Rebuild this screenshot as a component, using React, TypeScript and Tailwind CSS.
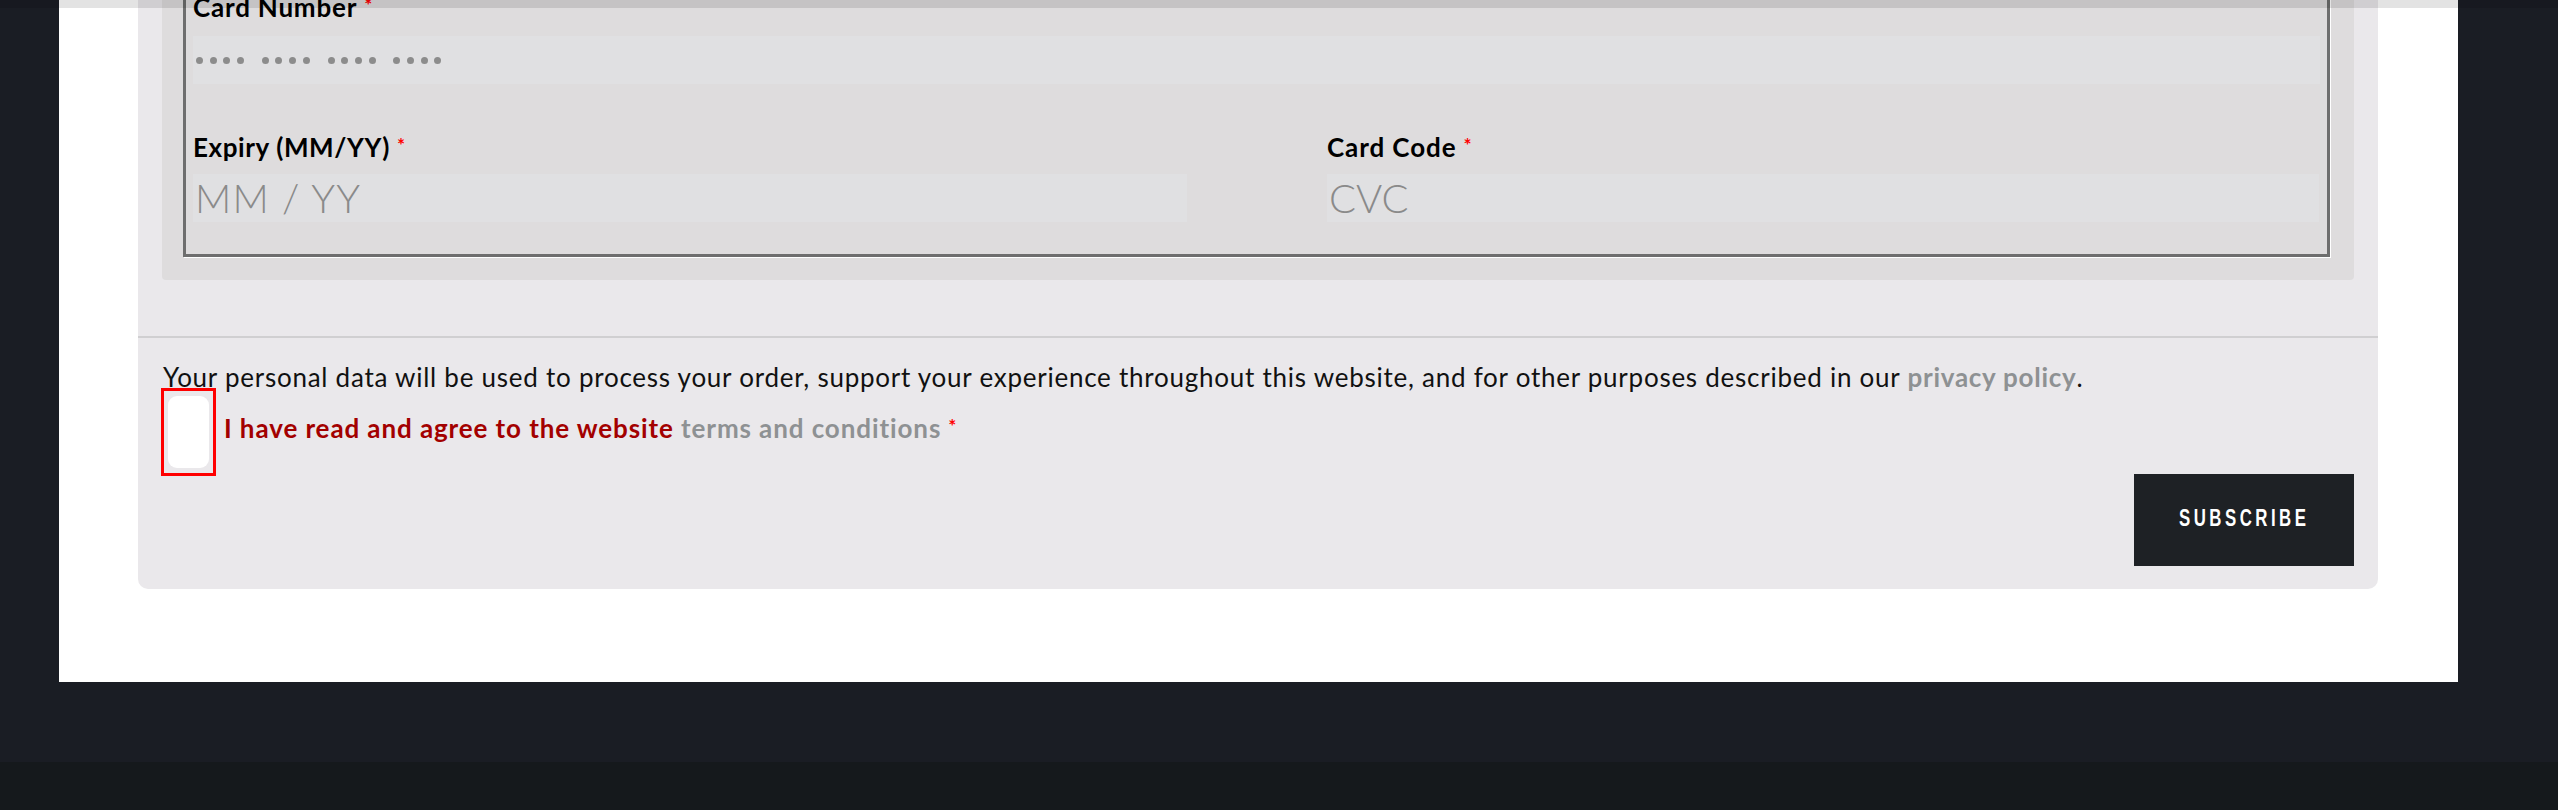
import React from "react";

const Star = () => (
  <span className="relative top-[3px] ml-[7px] align-top text-[19px] font-bold leading-none text-[#ff0000]">*</span>
);

const DotGroup = () => (
  <div className="flex gap-[6.7px]">
    {[0, 1, 2, 3].map((i) => (
      <div key={i} className="h-[7px] w-[7px] rounded-full bg-[#8c8c8c]" />
    ))}
  </div>
);

export default function App() {
  return (
    <div
      className="relative flex h-[810px] w-[2558px] flex-col overflow-hidden bg-[#1a1d24]"
      style={{ fontFamily: "Lato, 'Noto Sans', sans-serif" }}
    >
      <div className="ml-[59px] h-[682px] w-[2399px] shrink-0 overflow-hidden bg-white">
        <div className="-mt-[60px] ml-[79px] w-[2240px] rounded-b-[10px] bg-[#eae8eb] pb-[23px] pt-[20px]">
          {/* inner panel */}
          <div className="mx-[24px] rounded-b-[4px] bg-[#dedcdd] pb-[23px] pl-[21px] pr-[24px] pt-[12px]">
            <div className="border-[3px] border-[#6e6e6e] px-[7px] pb-[32px] pt-[17px] shadow-[1px_1px_0_#ffffff]">
              <div className="h-[30px] text-[26px] font-bold leading-[30px] tracking-[0.8px] text-black">
                Card Number
                <Star />
              </div>
              <div className="mt-[14px] flex h-[48px] items-center gap-[17.7px] bg-[#e0e0e2] pl-[3px]">
                <DotGroup />
                <DotGroup />
                <DotGroup />
                <DotGroup />
              </div>
              <div className="mt-[48px] grid grid-cols-[994px_992px] gap-x-[140px]">
                <div>
                  <div className="h-[30px] text-[26px] font-bold leading-[30px] tracking-[0.6px] text-black">
                    Expiry (MM/YY)
                    <Star />
                  </div>
                  <div className="mt-[12px] h-[48px] bg-[#e0e0e2] pl-[2px] text-[40px] font-light leading-[48px] tracking-[1.2px] text-[#8a8a8a]">
                    MM / YY
                  </div>
                </div>
                <div>
                  <div className="h-[30px] text-[26px] font-bold leading-[30px] tracking-[0.9px] text-black">
                    Card Code
                    <Star />
                  </div>
                  <div className="mt-[12px] h-[48px] bg-[#e0e0e2] pl-[2px] text-[40px] font-light leading-[48px] text-[#8a8a8a]">
                    CVC
                  </div>
                </div>
              </div>
            </div>
          </div>

          <div className="mt-[56px] h-[2px] bg-[#d0cfd1]" />

          <p className="ml-[25px] mt-[24px] whitespace-nowrap text-[26px] leading-[30px] tracking-[0.75px] text-[#111111]">
            Your personal data will be used to process your order, support your experience throughout this website,
            and for other purposes described in our{" "}
            <span className="font-bold text-[#8e9193]">privacy policy</span>.
          </p>

          <div className="ml-[23px] -mt-[4px] flex h-[88px] items-start gap-[8px]">
            <div className="h-[88px] w-[55px] shrink-0 border-[3px] border-[#ff0000] px-[4px] py-[5px]">
              <div className="h-full w-full rounded-[9px] bg-white" />
            </div>
            <div className="pt-[25px] text-[26px] font-bold leading-[30px] tracking-[0.9px] text-[#a30000]">
              I have read and agree to the website{" "}
              <span className="text-[#8e9193]">terms and conditions</span>
              <Star />
            </div>
          </div>

          <div className="-mt-[2px] flex justify-end pr-[24px]">
            <button className="flex h-[92px] w-[220px] items-center justify-center bg-[#1e2125] pb-[5px]">
              <span
                className="inline-block scale-x-[0.7] text-[24px] font-bold leading-none tracking-[5px] text-white"
                style={{ fontFamily: "'Liberation Sans', Arial, sans-serif" }}
              >
                SUBSCRIBE
              </span>
            </button>
          </div>
        </div>
      </div>
      <div className="h-[80px] shrink-0 bg-[#1a1d24]" />
      <div className="h-[48px] shrink-0 bg-[#15191c]" />
      <div className="pointer-events-none absolute left-0 right-0 top-0 h-[8px] bg-black/[0.11]" />
    </div>
  );
}
